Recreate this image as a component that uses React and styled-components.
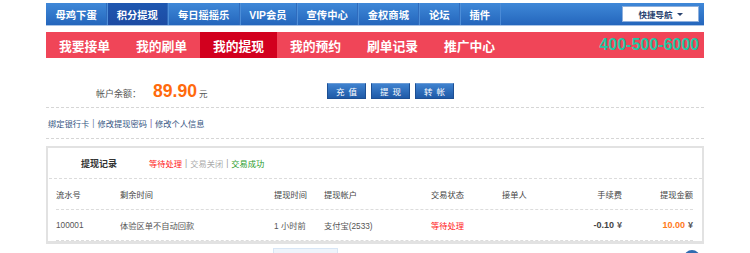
import React from "react";
import styled, { createGlobalStyle } from "styled-components";

const Global = createGlobalStyle`
  html, body { margin: 0; padding: 0; background: #fff; }
  body {
    font-family: "Liberation Sans", "Noto Sans CJK SC", sans-serif;
    font-size: 8.25px;
    color: #444;
    overflow: hidden;
  }
`;

const Page = styled.div`
  width: 658px;
  margin: 3px auto 0;
`;

const TopNav = styled.div`
  height: 22px;
  display: flex;
  align-items: stretch;
  background: linear-gradient(#3f88d8, #2466bc);
  border-bottom: 1px solid #a9c4e6;
`;

const TopItem = styled.a`
  display: flex;
  align-items: center;
  padding: 0 9.5px;
  font-size: 10.3px;
  font-weight: bold;
  color: #fff;
  text-decoration: none;
  border-right: 1px solid ${(p) => (p.$last ? "#4a8ad6" : "#2f6bbd")};
  box-shadow: ${(p) => (p.$first ? "none" : "inset 1px 0 0 #4d8ed8")};
  background: ${(p) => (p.$active ? "linear-gradient(#1e57b0, #1c4ba3)" : "transparent")};
`;

const QuickNav = styled.div`
  margin: 3px 5px 0 auto;
  width: 75px;
  height: 14px;
  background: #fff;
  border: 1px solid #8fb0dc;
  display: flex;
  align-items: center;
  justify-content: center;
  gap: 4px;
  font-size: 8.5px;
  font-weight: bold;
  color: #2a4470;
`;

const Caret = styled.span`
  width: 0;
  height: 0;
  border-left: 3px solid transparent;
  border-right: 3px solid transparent;
  border-top: 3px solid #2a4470;
`;

const RedBar = styled.div`
  margin-top: 6px;
  height: 26px;
  display: flex;
  align-items: stretch;
  background: #f04558;
`;

const RedItem = styled.a`
  width: 77px;
  display: flex;
  align-items: center;
  justify-content: center;
  font-size: 12.8px;
  font-weight: bold;
  color: #fff;
  text-decoration: none;
  background: ${(p) => (p.$active ? "#d2001e" : "transparent")};
`;

const Phone = styled.div`
  margin-left: auto;
  padding-right: 5px;
  display: flex;
  align-items: center;
  font-family: "Liberation Sans", sans-serif;
  font-size: 16px;
  font-weight: bold;
  color: #22c8a4;
`;

const BalanceRow = styled.div`
  margin-top: 25px;
  height: 16px;
  display: flex;
  align-items: center;
  padding-left: 50px;
`;

const BalanceInfo = styled.div`
  width: 231px;
  display: flex;
  align-items: baseline;
`;

const Label = styled.span`
  font-size: 9px;
  color: #555;
`;

const Amount = styled.span`
  margin-left: 12px;
  font-family: "Liberation Sans", sans-serif;
  font-size: 17.6px;
  font-weight: bold;
  color: #ff6a0c;
`;

const Unit = styled.span`
  margin-left: 2px;
  font-size: 8.5px;
  color: #555;
`;

const Buttons = styled.div`
  display: flex;
  gap: 5px;
`;

const BlueBtn = styled.button`
  width: 39px;
  height: 16px;
  padding: 0;
  border: 1px solid #1d4f93;
  border-top-color: #6a9bd6;
  background: linear-gradient(#3f82cf, #1f5aa7);
  color: #fff;
  font-family: "Noto Sans CJK SC", sans-serif;
  font-size: 8.5px;
  letter-spacing: 4px;
  text-indent: 4px;
  line-height: 14px;
  cursor: pointer;
`;

const Dashed = styled.div`
  border-top: 1px dashed #d6d6d6;
  margin-top: ${(p) => p.$mt || 0}px;
`;

const LinksRow = styled.div`
  height: 30px;
  display: flex;
  align-items: center;
  padding-left: 2px;
  gap: 3px;
  font-size: 8.25px;
`;

const LinkA = styled.a`
  color: #355582;
  text-decoration: none;
`;

const Sep = styled.span`
  color: ${(p) => p.$c || "#6b7fa3"};
`;

const RecordBox = styled.div`
  margin-top: 7px;
  border: 2px solid #e2e2e2;
  border-bottom-width: 3px;
  background: #fff;
`;

const RecordHead = styled.div`
  height: 30px;
  display: flex;
  align-items: center;
  padding-left: 32px;
  margin-left: 1px;
  border-bottom: 1px dashed #dcdcdc;
  font-size: 8.25px;
`;

const RecordTitle = styled.span`
  font-size: 9px;
  font-weight: bold;
  color: #333;
  margin-right: 32px;
`;

const Filter = styled.span`
  color: ${(p) => p.$c};
`;

const FilterSep = styled.span`
  color: #999;
  margin: 0 3px;
`;

const Table = styled.div`
  padding: 0 9px 0 8px;
`;

const Row = styled.div`
  display: grid;
  grid-template-columns: 64px 154px 50px 107px 71px 50px 70px 71px;
  height: 30px;
  align-items: center;
  border-bottom: 1px dashed #dcdcdc;
  font-size: 8.25px;
  color: ${(p) => (p.$head ? "#444" : "#555")};
`;

const Cell = styled.div`
  white-space: nowrap;
  text-align: ${(p) => (p.$right ? "right" : "left")};
  color: ${(p) => p.$c || "inherit"};
  font-weight: ${(p) => (p.$bold ? "bold" : "normal")};
  font-size: ${(p) => (p.$bold ? "9px" : "inherit")};
`;

const Yen = styled.span`
  color: #555;
  margin-left: 3px;
`;

const Footer = styled.div`
  display: flex;
  align-items: flex-start;
  height: 7px;
  overflow: hidden;
  padding: 0 4px 0 227px;
  margin-top: 3px;
`;

const Pager = styled.div`
  margin-top: 1px;
  width: 55px;
  height: 8px;
  background: #eef4fb;
  border: 1px solid #d8e6f5;
  border-bottom: none;
  display: flex;
  align-items: flex-end;
  padding-left: 8px;
`;

const PagerDot = styled.span`
  width: 8px;
  height: 4px;
  background: #7fb0e0;
  border-radius: 4px 4px 0 0;
`;

const TopBtn = styled.div`
  margin: 3px 0 0 auto;
  flex: none;
  width: 16px;
  height: 16px;
  border-radius: 50%;
  background: #2f6bb0;
`;

const topItems = ["母鸡下蛋", "积分提现", "每日摇摇乐", "VIP会员", "宣传中心", "金权商城", "论坛", "插件"];
const redItems = ["我要接单", "我的刷单", "我的提现", "我的预约", "刷单记录", "推广中心"];

export default function App() {
  return (
    <>
      <Global />
      <Page>
        <TopNav>
          {topItems.map((t, i) => (
            <TopItem key={t} $active={i === 1} $first={i === 0} $last={i === topItems.length - 1}>
              {t}
            </TopItem>
          ))}
          <QuickNav>
            快捷导航 <Caret />
          </QuickNav>
        </TopNav>
        <RedBar>
          {redItems.map((t, i) => (
            <RedItem key={t} $active={i === 2}>
              {t}
            </RedItem>
          ))}
          <Phone>400-500-6000</Phone>
        </RedBar>

        <BalanceRow>
          <BalanceInfo>
            <Label>帐户余额：</Label>
            <Amount>89.90</Amount>
            <Unit>元</Unit>
          </BalanceInfo>
          <Buttons>
            <BlueBtn>充值</BlueBtn>
            <BlueBtn>提现</BlueBtn>
            <BlueBtn>转帐</BlueBtn>
          </Buttons>
        </BalanceRow>
        <Dashed $mt={8} />
        <LinksRow>
          <LinkA>绑定银行卡</LinkA>
          <Sep>|</Sep>
          <LinkA>修改提现密码</LinkA>
          <Sep $c="#7a4a9a">|</Sep>
          <LinkA>修改个人信息</LinkA>
        </LinksRow>
        <Dashed />

        <RecordBox>
          <RecordHead>
            <RecordTitle>提现记录</RecordTitle>
            <Filter $c="#ff1a1a">等待处理</Filter>
            <FilterSep>|</FilterSep>
            <Filter $c="#aaa">交易关闭</Filter>
            <FilterSep>|</FilterSep>
            <Filter $c="#2a9a2a">交易成功</Filter>
          </RecordHead>
          <Table>
            <Row $head>
              <Cell>流水号</Cell>
              <Cell>剩余时间</Cell>
              <Cell>提现时间</Cell>
              <Cell>提现帐户</Cell>
              <Cell>交易状态</Cell>
              <Cell>接单人</Cell>
              <Cell $right>手续费</Cell>
              <Cell $right>提现金额</Cell>
            </Row>
            <Row>
              <Cell>100001</Cell>
              <Cell>体验区单不自动回款</Cell>
              <Cell>1 小时前</Cell>
              <Cell>支付宝(2533)</Cell>
              <Cell $c="#ff1a1a">等待处理</Cell>
              <Cell></Cell>
              <Cell $right $bold $c="#444">
                -0.10<Yen>¥</Yen>
              </Cell>
              <Cell $right $bold $c="#ff7a1a">
                10.00<Yen>¥</Yen>
              </Cell>
            </Row>
          </Table>
        </RecordBox>
        <Footer>
          <Pager>
            <PagerDot />
          </Pager>
          <TopBtn />
        </Footer>
      </Page>
    </>
  );
}
